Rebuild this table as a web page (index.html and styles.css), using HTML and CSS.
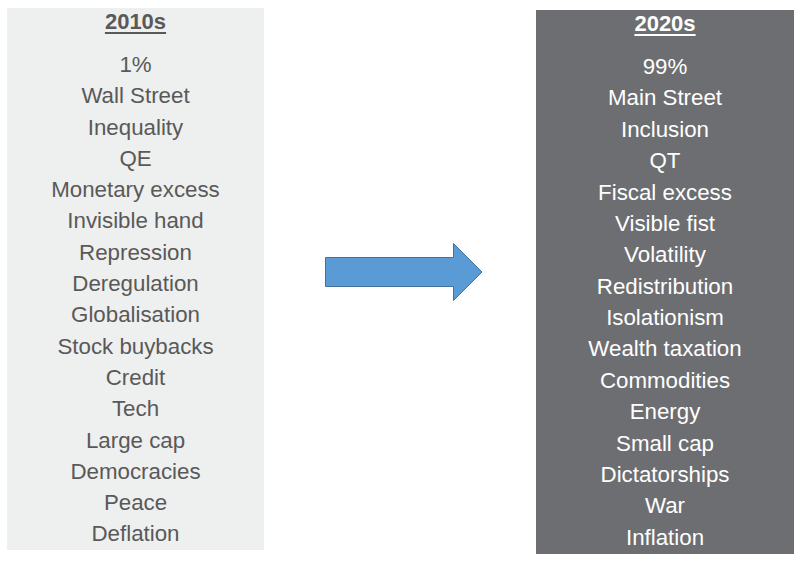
FILE: index.html
```html
<!DOCTYPE html>
<html>
<head>
<meta charset="utf-8">
<link rel="stylesheet" href="styles.css">
</head>
<body>
<div class="stage">
  <section class="panel panel-old">
    <h2 class="title">2010s</h2>
    <ul class="items">
      <li>1%</li>
      <li>Wall Street</li>
      <li>Inequality</li>
      <li>QE</li>
      <li>Monetary excess</li>
      <li>Invisible hand</li>
      <li>Repression</li>
      <li>Deregulation</li>
      <li>Globalisation</li>
      <li>Stock buybacks</li>
      <li>Credit</li>
      <li>Tech</li>
      <li>Large cap</li>
      <li>Democracies</li>
      <li>Peace</li>
      <li>Deflation</li>
    </ul>
  </section>
  <svg class="arrow" width="160" height="60" viewBox="0 0 160 60" xmlns="http://www.w3.org/2000/svg">
    <polygon points="1.5,15.5 129.5,15.5 129.5,1.5 158,30 129.5,58.5 129.5,44.5 1.5,44.5" fill="#5b9bd5" stroke="#41719c" stroke-width="1"/>
  </svg>
  <section class="panel panel-new">
    <h2 class="title">2020s</h2>
    <ul class="items">
      <li>99%</li>
      <li>Main Street</li>
      <li>Inclusion</li>
      <li>QT</li>
      <li>Fiscal excess</li>
      <li>Visible fist</li>
      <li>Volatility</li>
      <li>Redistribution</li>
      <li>Isolationism</li>
      <li>Wealth taxation</li>
      <li>Commodities</li>
      <li>Energy</li>
      <li>Small cap</li>
      <li>Dictatorships</li>
      <li>War</li>
      <li>Inflation</li>
    </ul>
  </section>
</div>
</body>
</html>
```
FILE: styles.css
```css
html, body {
  margin: 0;
  padding: 0;
  background: #ffffff;
}
body {
  font-family: "Liberation Sans", Arial, sans-serif;
  width: 806px;
  height: 563px;
  overflow: hidden;
}
.stage {
  display: flex;
  align-items: flex-start;
  padding-left: 7px;
}
.panel {
  width: 257px;
  box-sizing: border-box;
  text-align: center;
  font-size: 22.3px;
}
.panel-old {
  margin-top: 8px;
  height: 542px;
  background: #eeefef;
  color: #595959;
}
.panel-new {
  margin-top: 10px;
  width: 258px;
  height: 544px;
  background: #6d6e71;
  color: #ffffff;
}
.title {
  margin: 0;
  font-size: 22px;
  font-weight: bold;
  line-height: 28px;
  text-decoration: underline;
  text-decoration-thickness: 2px;
  text-underline-offset: 3px;
}
.items {
  list-style: none;
  margin: 13px 0 0;
  padding: 0;
}
.items li {
  line-height: 31.3px;
}
.panel-new .items li {
  line-height: 31.38px;
}
.arrow {
  display: block;
  margin-top: 242px;
  margin-left: 60px;
  margin-right: 52px;
}
```
